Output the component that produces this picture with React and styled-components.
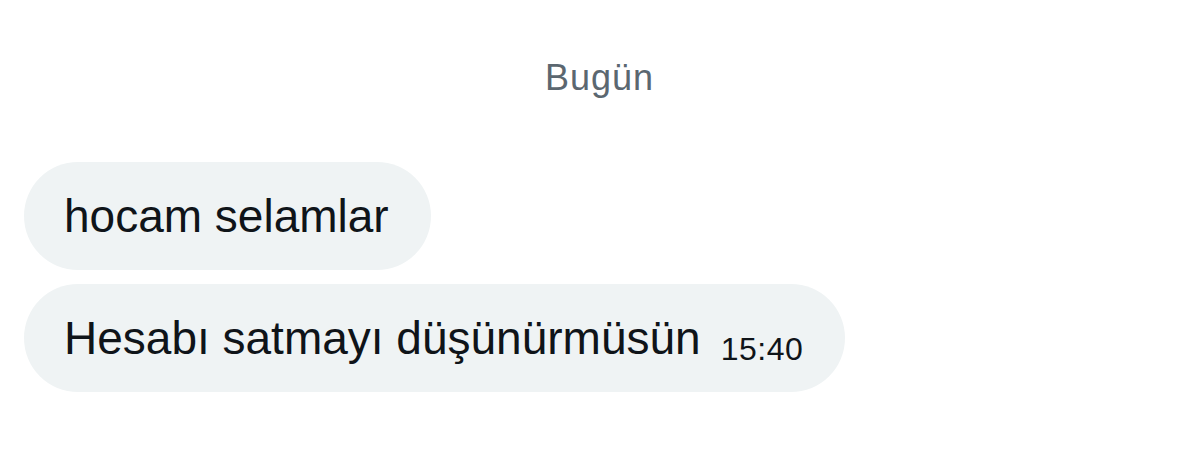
import React from "react";
import styled, { createGlobalStyle } from "styled-components";

const Global = createGlobalStyle`
  html, body { margin: 0; padding: 0; background: #ffffff; }
  body { font-family: "Liberation Sans", Arial, sans-serif; }
`;

const Page = styled.div`
  width: 1199px;
  height: 466px;
  background: #ffffff;
  display: flex;
  flex-direction: column;
  box-sizing: border-box;
  padding: 56px 24px 0;
`;

const DateLabel = styled.div`
  text-align: center;
  color: #5b6770;
  font-size: 36px;
  line-height: 44px;
  letter-spacing: 1px;
  margin-bottom: 62px;
`;

const Thread = styled.div`
  display: flex;
  flex-direction: column;
  align-items: flex-start;
  gap: 14px;
`;

const Bubble = styled.div`
  display: inline-flex;
  align-items: center;
  height: 108px;
  box-sizing: border-box;
  padding: 0 42px 0 40px;
  border-radius: 54px;
  background: #eff3f4;
  color: #0f1419;
`;

const Text = styled.span`
  font-size: 46px;
  line-height: 50px;
`;

const Time = styled.span`
  font-size: 32px;
  line-height: 30px;
  letter-spacing: 0.5px;
  margin-left: 20px;
  margin-top: 22px;
`;

export default function App() {
  return (
    <>
      <Global />
      <Page>
        <DateLabel>Bugün</DateLabel>
        <Thread>
          <Bubble>
            <Text>hocam selamlar</Text>
          </Bubble>
          <Bubble>
            <Text>Hesabı satmayı düşünürmüsün</Text>
            <Time>15:40</Time>
          </Bubble>
        </Thread>
      </Page>
    </>
  );
}
